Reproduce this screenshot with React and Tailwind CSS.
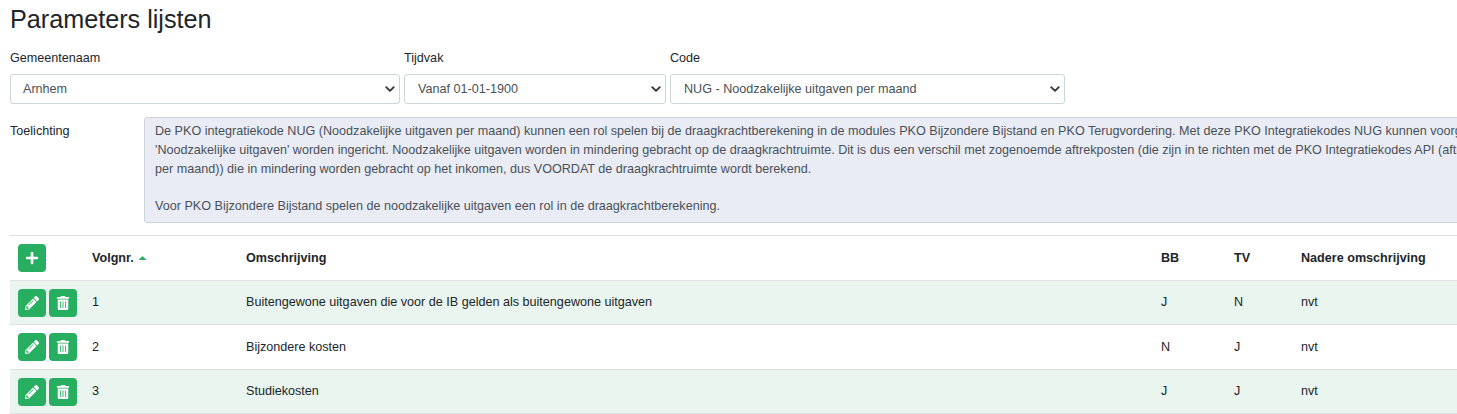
import React from "react";
import { FaPlus, FaPencilAlt, FaTrashAlt } from "react-icons/fa";

const Chevron = () => (
  <svg viewBox="0 0 16 16" className="absolute right-[5px] top-[10px] w-[10px] h-[10px] pointer-events-none" fill="none" stroke="#343a40" strokeWidth="3" strokeLinecap="round" strokeLinejoin="round">
    <path d="M2 5l6 6 6-6" />
  </svg>
);

const Select = ({ label, value, className, selectClass }) => (
  <div className={className}>
    <label className="block h-[26px] pt-[1px] leading-[18px] text-[#212529]">{label}</label>
    <div className="relative">
      <select defaultValue={value} className={`w-full h-[30px] appearance-none rounded-[3px] border border-[#ced4da] bg-white pr-6 text-[12.6px] text-[#495057] outline-none ${selectClass}`}>
        <option>{value}</option>
      </select>
      <Chevron />
    </div>
  </div>
);

const Btn = ({ icon: Icon, size = 14 }) => (
  <button className="w-[28px] h-[28px] rounded-[4px] bg-[#27ae60] text-white flex items-center justify-center">
    <Icon size={size} />
  </button>
);

const rows = [
  { h: "h-[44px]", bg: "bg-[#e9f5ee]", cells: ["1", "Buitengewone uitgaven die voor de IB gelden als buitengewone uitgaven", "J", "N", "nvt"] },
  { h: "h-[45px]", bg: "bg-white", cells: ["2", "Bijzondere kosten", "N", "J", "nvt"] },
  { h: "h-[44px]", bg: "bg-[#e9f5ee]", cells: ["3", "Studiekosten", "J", "J", "nvt"] },
];

export default function App() {
  return (
    <div className="w-[1457px] h-[414px] overflow-hidden bg-white pl-[10px] text-[12.6px] text-[#212529]" style={{ fontFamily: '"Liberation Sans", Arial, sans-serif' }}>
      <h1 className="text-[25.2px] leading-[29px] pt-[5px] h-[46px] font-normal">Parameters lijsten</h1>
      <div className="flex gap-[4px] mt-[2px]">
        <Select label="Gemeentenaam" value="Arnhem" className="w-[390px]" selectClass="pl-[12px]" />
        <Select label="Tijdvak" value="Vanaf 01-01-1900" className="w-[262px]" selectClass="pl-[13px]" />
        <Select label="Code" value="NUG - Noodzakelijke uitgaven per maand" className="w-[395px]" selectClass="pl-[13px]" />
      </div>
      <div className="flex mt-[13px]">
        <div className="w-[134px] shrink-0 pt-[5px] leading-[18px]">Toelichting</div>
        <div className="w-[1400px] shrink-0 h-[106px] rounded-[3px] border border-[#ced4da] bg-[#e9ecf5] pl-[10px] pt-[4px] leading-[18.75px] text-[#495057] whitespace-nowrap">
          <p>De PKO integratiekode NUG (Noodzakelijke uitgaven per maand) kunnen een rol spelen bij de draagkrachtberekening in de modules PKO Bijzondere Bijstand en PKO Terugvordering. Met deze PKO Integratiekodes NUG kunnen voorgaande</p>
          <p>'Noodzakelijke uitgaven' worden ingericht. Noodzakelijke uitgaven worden in mindering gebracht op de draagkrachtruimte. Dit is dus een verschil met zogenoemde aftrekposten (die zijn in te richten met de PKO Integratiekodes API (aftrekposten</p>
          <p>per maand)) die in mindering worden gebracht op het inkomen, dus VOORDAT de draagkrachtruimte wordt berekend.</p>
          <p className="mt-[18.75px]">Voor PKO Bijzondere Bijstand spelen de noodzakelijke uitgaven een rol in de draagkrachtberekening.</p>
        </div>
      </div>
      <table className="mt-[12px] w-[1500px] table-fixed border-t border-[#dee2e6] border-collapse">
        <colgroup>
          <col className="w-[82px]" />
          <col className="w-[154px]" />
          <col className="w-[915px]" />
          <col className="w-[73px]" />
          <col className="w-[67px]" />
          <col />
        </colgroup>
        <thead>
          <tr className="h-[45px] border-b border-[#dee2e6] text-left font-bold">
            <th className="pl-[8px]"><Btn icon={FaPlus} /></th>
            <th>
              <span className="inline-flex items-center gap-[4px]">
                Volgnr.
                <svg viewBox="0 0 8 4" className="w-[9px] h-[4px]"><path d="M0 4L4 0l4 4z" fill="#27ae60" /></svg>
              </span>
            </th>
            <th>Omschrijving</th>
            <th>BB</th>
            <th>TV</th>
            <th>Nadere omschrijving</th>
          </tr>
        </thead>
        <tbody>
          {rows.map((r) => (
            <tr key={r.cells[0]} className={`${r.h} ${r.bg} border-b border-[#dee2e6]`}>
              <td className="pl-[8px]">
                <div className="flex gap-[3px]">
                  <Btn icon={FaPencilAlt} />
                  <Btn icon={FaTrashAlt} />
                </div>
              </td>
              {r.cells.map((c, j) => <td key={j}>{c}</td>)}
            </tr>
          ))}
        </tbody>
      </table>
    </div>
  );
}
